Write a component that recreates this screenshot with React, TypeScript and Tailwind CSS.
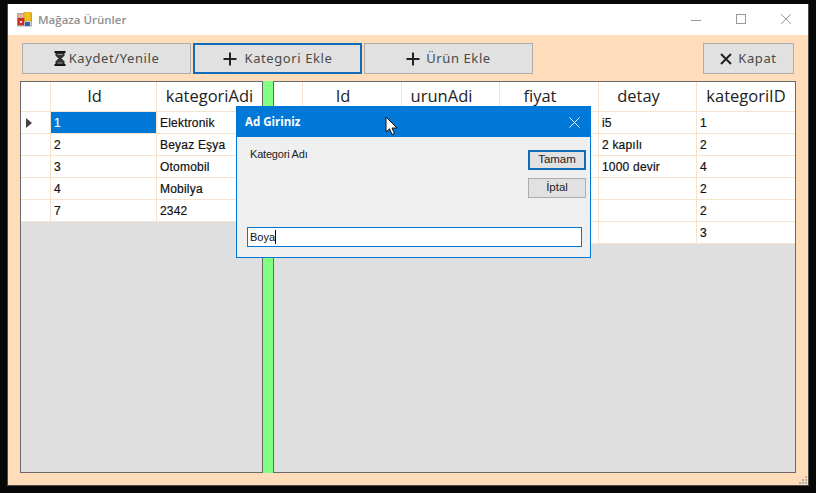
import React from "react";

function Plus() {
  return (
    <svg width="14" height="14" viewBox="0 0 14 14" className="shrink-0">
      <path d="M7 0.5V13.5M0.5 7H13.5" stroke="#222" strokeWidth="2" />
    </svg>
  );
}

function Btn({ children, focused, className }: { children: React.ReactNode; focused?: boolean; className: string }) {
  return (
    <div
      className={`${className} h-[31px] flex items-center justify-center gap-[6px] bg-[#e1e1e1] text-[13px] tracking-[0.6px] text-[#4a4a4a] font-['Noto_Sans',sans-serif] ${
        focused ? "border-2 border-[#0f6cb8]" : "border border-[#adadad]"
      }`}
    >
      {children}
    </div>
  );
}

function Grid({
  template,
  className,
  headers,
  rows,
  selected,
}: {
  template: string;
  className: string;
  headers: string[];
  rows: string[][];
  selected?: boolean;
}) {
  return (
    <div className={`${className} h-full border border-[#696969] bg-[#dfdfdf]`}>
      <div className={`grid ${template} h-[30px] bg-white border-b border-[#f5e3cf]`}>
        <div className="border-r border-[#f5e3cf]" />
        {headers.map((h, i) => (
          <div
            key={i}
            className={`flex items-center justify-center border-r border-[#f5e3cf] last:border-r-0 font-['Open_Sans',sans-serif] text-[16.5px] text-[#222] whitespace-nowrap overflow-hidden ${
              h.length >= 10 ? "pr-0" : "pr-[18px]"
            }`}
          >
            {h}
          </div>
        ))}
      </div>
      {rows.map((r, ri) => (
        <div key={ri} className={`grid ${template} h-[22px] bg-white border-b border-[#f5e3cf]`}>
          <div className="flex items-center pl-[5px] border-r border-[#f5e3cf]">
            {selected && ri === 0 && (
              <svg width="6" height="10" viewBox="0 0 6 10">
                <path d="M0 0L6 5L0 10Z" fill="#444" />
              </svg>
            )}
          </div>
          {r.map((c, ci) => (
            <div
              key={ci}
              className={`flex items-center pl-[3px] border-r border-[#f5e3cf] last:border-r-0 text-[12px] tracking-[0.2px] font-['Liberation_Sans',sans-serif] [-webkit-text-stroke:0.2px] whitespace-nowrap overflow-hidden ${
                selected && ri === 0 && ci === 0 ? "bg-[#0078d7] text-white" : "text-[#111]"
              }`}
            >
              {c}
            </div>
          ))}
        </div>
      ))}
    </div>
  );
}

export default function App() {
  return (
    <div className="relative w-[816px] h-[493px] bg-[#080808] pl-[7px] pt-[4px] overflow-hidden">
      <div className="w-[802px] h-[482px] border border-t-0 border-[#4a4a4a] flex flex-col bg-[#ffddbb] relative">
        {/* title bar */}
        <div className="h-[31px] shrink-0 bg-white flex items-center pl-[9px] pr-[17px]">
          <svg width="15" height="15" viewBox="0 0 15 15" className="shrink-0">
            <rect x="0.5" y="1.5" width="14" height="12.5" fill="#e4e0d8" stroke="#a8a8a8" />
            <rect x="1" y="2" width="6" height="3" fill="#e8b098" />
            <rect x="7" y="0" width="7" height="9" fill="#f4c020" stroke="#b89020" strokeWidth="0.5" />
            <rect x="1" y="6" width="6" height="7" fill="#d83020" stroke="#902020" strokeWidth="0.5" />
            <rect x="3" y="9" width="2" height="2" fill="#f0e0e0" />
            <rect x="8" y="10" width="5" height="4" fill="#3060c0" />
          </svg>
          <span className="ml-[6px] text-[11.5px] font-semibold text-[#8f8f8f] font-['Open_Sans',sans-serif]">
            Mağaza Ürünler
          </span>
          <div className="ml-auto flex items-center gap-[35px]">
            <svg width="10" height="11" viewBox="0 0 10 11">
              <path d="M0 6.5H10" stroke="#999" />
            </svg>
            <svg width="10" height="11" viewBox="0 0 10 11">
              <rect x="0.5" y="0.5" width="9" height="9" fill="none" stroke="#999" />
            </svg>
            <svg width="10" height="11" viewBox="0 0 10 11">
              <path d="M0 0L10 10M10 0L0 10" stroke="#999" />
            </svg>
          </div>
        </div>
        {/* content */}
        <div className="flex-1 flex flex-col pl-[12px] pr-[12px] pt-[8px] pb-[12px] min-h-0">
          <div className="flex gap-[2px] px-[2px] shrink-0">
            <Btn className="w-[169px]">
              <svg width="12" height="15" viewBox="0 0 12 15" className="shrink-0 -mr-[3px]">
                <path d="M0.5 1H11.5M0.5 14H11.5" stroke="#111" strokeWidth="2" />
                <path d="M2 2H10V4.5L7 7.5L10 10.5V13H2V10.5L5 7.5L2 4.5Z" fill="#333" stroke="#222" />
                <path d="M3.5 3H8.5V4H3.5ZM3.5 11.5H8.5V12.5H3.5Z" fill="#999" />
              </svg>
              <span>Kaydet/Yenile</span>
            </Btn>
            <Btn className="w-[169px]" focused>
              <Plus />
              <span className="ml-[2px]">Kategori Ekle</span>
            </Btn>
            <Btn className="w-[169px]">
              <Plus />
              <span>Ürün Ekle</span>
            </Btn>
            <Btn className="w-[91px] ml-auto">
              <svg width="12" height="12" viewBox="0 0 12 12" className="shrink-0">
                <path d="M1 1L11 11M11 1L1 11" stroke="#222" strokeWidth="2" />
              </svg>
              <span>Kapat</span>
            </Btn>
          </div>
          <div className="flex mt-[7px] flex-1 min-h-0">
            <Grid
              className="w-[243px] shrink-0"
              template="grid-cols-[30px_106px_105px]"
              headers={["Id", "kategoriAdi"]}
              selected
              rows={[
                ["1", "Elektronik"],
                ["2", "Beyaz Eşya"],
                ["3", "Otomobil"],
                ["4", "Mobilya"],
                ["7", "2342"],
              ]}
            />
            <div className="w-[10px] shrink-0 bg-[#80ff80]" />
            <Grid
              className="w-[523px] shrink-0"
              template="grid-cols-[29px_99px_98px_99px_98px_98px]"
              headers={["Id", "urunAdi", "fiyat", "detay", "kategoriID"]}
              rows={[
                ["", "", "", "i5", "1"],
                ["", "", "", "2 kapılı", "2"],
                ["", "", "", "1000 devir", "4"],
                ["", "", "", "", "2"],
                ["", "", "", "", "2"],
                ["", "", "", "", "3"],
              ]}
            />
          </div>
        </div>
        {/* resize grip */}
        <svg width="8" height="8" viewBox="0 0 8 8" className="absolute right-[1px] bottom-[1px]">
          <path d="M6 0h2v2H6zM3 3h2v2H3zM6 3h2v2H6zM0 6h2v2H0zM3 6h2v2H3zM6 6h2v2H6z" fill="#b8b0a8" />
        </svg>
      </div>

      {/* dialog */}
      <div className="absolute left-[236px] top-[106px] w-[355px] h-[152px] border border-[#0078d7] bg-[#efefef] flex flex-col">
        <div className="h-[30px] shrink-0 bg-[#0078d7] flex items-center pl-[8px] pr-[10px]">
          <span className="text-white text-[11.5px] font-bold font-['Open_Sans',sans-serif]">Ad Giriniz</span>
          <svg width="11" height="11" viewBox="0 0 11 11" className="ml-auto">
            <path d="M0.5 0.5L10.5 10.5M10.5 0.5L0.5 10.5" stroke="#fff" />
          </svg>
        </div>
        <div className="flex-1 flex flex-col pl-[10px] pr-[4px]">
          <div className="flex pt-[10px] pl-[3px]">
            <span className="text-[11px] leading-[14px] text-[#222] font-['Liberation_Sans',sans-serif] tracking-[-0.2px]">
              Kategori Adı
            </span>
            <div className="ml-auto mt-[3px] flex flex-col gap-[8px] w-[58px]">
              <div className="h-[20px] border-2 border-[#0f6cb8] bg-[#e1e1e1] flex items-center justify-center text-[11.5px] text-[#222] font-['Liberation_Sans',sans-serif]">
                Tamam
              </div>
              <div className="h-[20px] border border-[#adadad] bg-[#e1e1e1] flex items-center justify-center text-[11.5px] text-[#222] font-['Liberation_Sans',sans-serif]">
                İptal
              </div>
            </div>
          </div>
          <div className="mt-[29px] w-[335px] h-[20px] border border-[#0078d7] bg-white flex items-center pl-[2px] text-[11px] text-[#111] font-['Liberation_Sans',sans-serif]">
            Boya
            <span className="w-px h-[14px] bg-black" />
          </div>
        </div>
      </div>

      {/* mouse cursor */}
      <svg width="13" height="20" viewBox="0 0 13 20" className="absolute left-[385px] top-[116px]">
        <path d="M1 1V16L4.5 12.8L7 18.5L9.5 17.5L7 12H12Z" fill="#fff" stroke="#111" strokeWidth="1" />
      </svg>
    </div>
  );
}
